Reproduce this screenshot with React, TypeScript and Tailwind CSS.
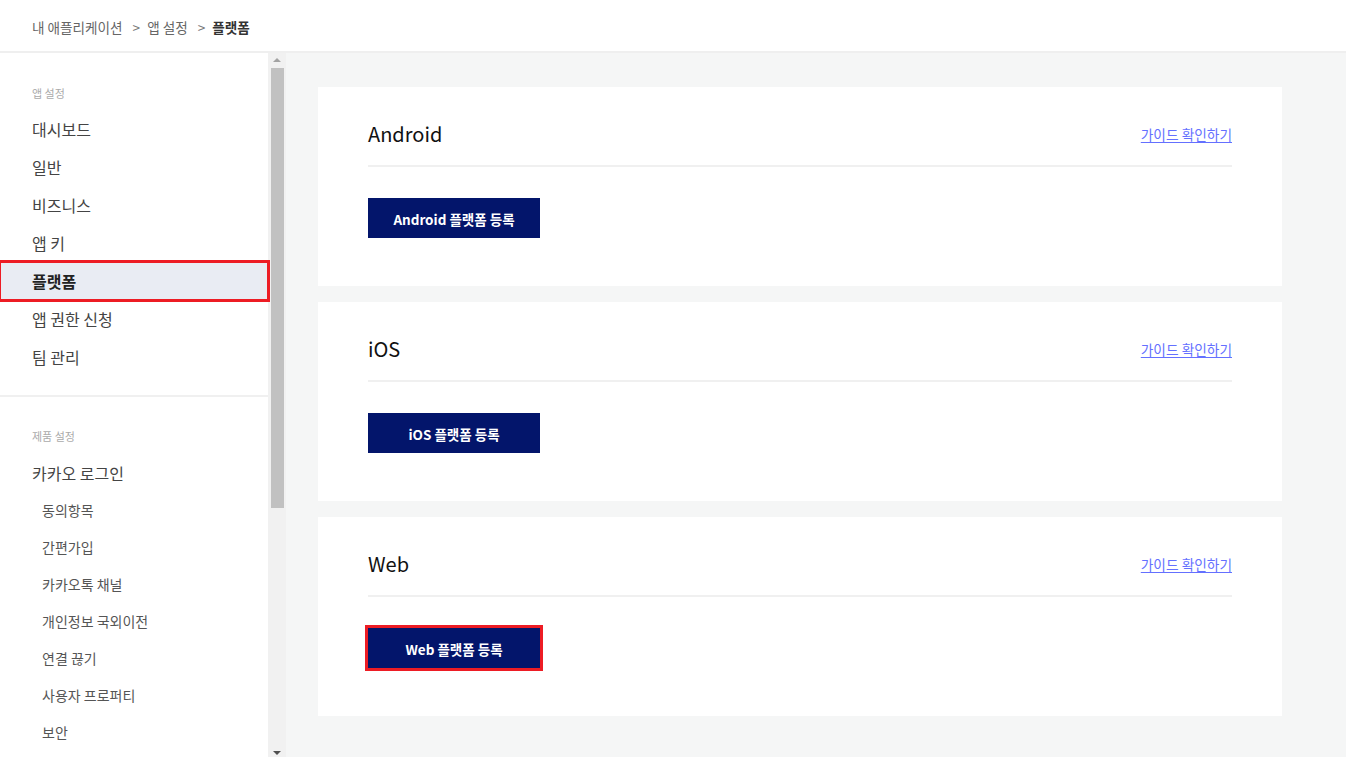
const font = { fontFamily: '"Noto Sans CJK KR", "Noto Sans", sans-serif' };

const appMenu = ["대시보드", "일반", "비즈니스", "앱 키", "플랫폼", "앱 권한 신청", "팀 관리"];
const loginSub = ["동의항목", "간편가입", "카카오톡 채널", "개인정보 국외이전", "연결 끊기", "사용자 프로퍼티", "보안"];

function PlatformCard({ name, marked }: { name: string; marked?: boolean }) {
  return (
    <section className="bg-white px-[50px] pt-[32px] pb-[48px]">
      <div className="flex items-center justify-between border-b-2 border-[#f0f0f0] pb-[16px]">
        <h2 className="text-[20px] leading-[30px] text-[#111]">{name}</h2>
        <a href="#" className="text-[13.7px] text-[#6470ff] underline underline-offset-2">
          가이드 확인하기
        </a>
      </div>
      <div className="mt-[31px] flex">
        <button
          className={
            "h-[40px] w-[172px] bg-[#03156b] pt-[2px] text-[13.5px] font-bold text-white " +
            (marked ? "outline-[3px] outline-solid outline-[#ed1c24]" : "")
          }
        >
          {name} 플랫폼 등록
        </button>
      </div>
    </section>
  );
}

export default function App() {
  return (
    <div className="flex h-screen flex-col overflow-hidden bg-white text-[#333]" style={font}>
      <header className="flex h-[53px] shrink-0 items-center border-b-2 border-[#efefef] px-[32px] pt-[4px] text-[13.6px]">
        <span className="text-[#666]">내 애플리케이션</span>
        <span className="ml-[10px] mr-[7px] text-[#777]">&gt;</span>
        <span className="text-[#666]">앱 설정</span>
        <span className="ml-[10px] mr-[7px] text-[#777]">&gt;</span>
        <span className="font-bold text-[#333]">플랫폼</span>
      </header>

      <div className="flex min-h-0 flex-1">
        <aside className="w-[268px] shrink-0 bg-white">
          <div className="border-b-2 border-[#f0f0f0] pt-[29px] pb-[19px]">
            <p className="px-[32px] text-[11px] leading-[22px] text-[#aaa]">앱 설정</p>
            <ul className="mt-[6px]">
              {appMenu.map((m) =>
                m === "플랫폼" ? (
                  <li
                    key={m}
                    className="relative z-10 flex h-[38px] items-center bg-[#e9ecf3] px-[32px] text-[16px] font-bold text-[#222] outline-[3px] outline-offset-[-1px] outline-solid outline-[#ed1c24]"
                  >
                    {m}
                  </li>
                ) : (
                  <li key={m} className="flex h-[38px] items-center px-[32px] text-[16px] text-[#444]">
                    {m}
                  </li>
                )
              )}
            </ul>
          </div>
          <div className="pt-[28px]">
            <p className="px-[32px] text-[11px] leading-[22px] text-[#aaa]">제품 설정</p>
            <p className="mt-[7px] flex h-[38px] items-center px-[32px] text-[16px] text-[#444]">카카오 로그인</p>
            <ul>
              {loginSub.map((m) => (
                <li key={m} className="flex h-[37px] items-center px-[42px] text-[14px] text-[#555]">
                  {m}
                </li>
              ))}
            </ul>
          </div>
        </aside>

        <div className="relative w-[18px] shrink-0 bg-[#f1f1f1]">
          <div className="mx-auto mt-[5px] h-0 w-0 border-x-[4px] border-b-[4px] border-x-transparent border-b-[#a3a3a3]" />
          <div className="mx-auto mt-[6px] h-[440px] w-[13px] bg-[#c1c1c1]" />
          <div className="absolute bottom-[2px] left-1/2 h-0 w-0 -translate-x-1/2 border-x-[4px] border-t-[4px] border-x-transparent border-t-[#505050]" />
        </div>

        <main className="flex min-w-0 flex-1 flex-col gap-[16px] bg-[#f5f6f6] py-[34px] pr-[64px] pl-[32px]">
          <PlatformCard name="Android" />
          <PlatformCard name="iOS" />
          <PlatformCard name="Web" marked />
        </main>
      </div>
    </div>
  );
}
